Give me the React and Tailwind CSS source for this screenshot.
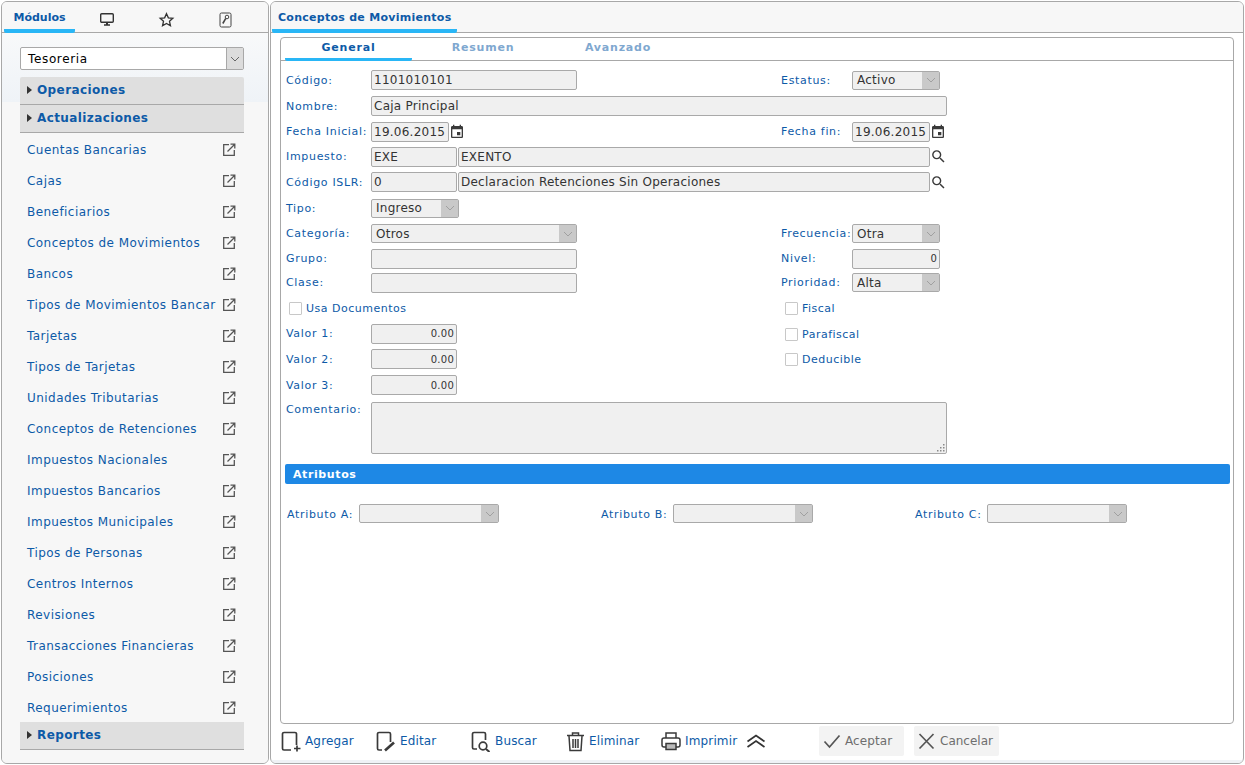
import React from "react";

const menu = ["Cuentas Bancarias","Cajas","Beneficiarios","Conceptos de Movimientos","Bancos","Tipos de Movimientos Bancar","Tarjetas","Tipos de Tarjetas","Unidades Tributarias","Conceptos de Retenciones","Impuestos Nacionales","Impuestos Bancarios","Impuestos Municipales","Tipos de Personas","Centros Internos","Revisiones","Transacciones Financieras","Posiciones","Requerimientos"];

const Ext = () => (
  <svg width="16" height="16" viewBox="0 0 16 16" fill="none" stroke="#555" strokeWidth="1.3"><path d="M8 2.700H2.700v10.600h10.600V8"/><path d="M6.500 9.500L13.500 2.500M9.500 2.200h4.300v4.300"/></svg>
);
const Cal = () => (
  <svg width="16" height="16" viewBox="0 0 24 24" fill="#3a3a3a" className="shrink-0"><path d="M17 12h-5v5h5v-5zM16 1v2H8V1H6v2H5c-1.11 0-1.99.9-1.99 2L3 19c0 1.1.89 2 2 2h14c1.1 0 2-.9 2-2V5c0-1.1-.9-2-2-2h-1V1h-2zm3 18H5V8h14v11z"/></svg>
);
const Search = () => (
  <svg width="17" height="17" viewBox="0 0 24 24" fill="#3a3a3a" className="shrink-0"><path d="M15.500 14h-.79l-.28-.27A6.470 6.470 0 0 0 16 9.500 6.500 6.500 0 1 0 9.500 16c1.610 0 3.090-.59 4.230-1.570l.27.28v.79l5 4.990L20.490 19l-4.990-5zm-6 0C7.010 14 5 11.990 5 9.500S7.010 5 9.500 5 14 7.010 14 9.500 11.990 14 9.500 14z"/></svg>
);
const Chev = ({ c = "#8f8f8f" }) => (
  <svg width="10" height="6" viewBox="0 0 10 6" fill="none" stroke={c} strokeWidth="1"><path d="M1 1l4 4 4-4"/></svg>
);
const Tri = () => (
  <svg width="6" height="8" viewBox="0 0 6 8" fill="#333" className="shrink-0"><path d="M1 0l5 4-5 4z"/></svg>
);

const Label = ({ w, children, pt = "pt-[2px]" }) => (
  <div className={`shrink-0 ${pt} text-[#0d5aa7] text-[11px] tracking-[0.68px] font-['DejaVu_Sans',sans-serif]`} style={{ width: w }}>{children}</div>
);
const Input = ({ w, children, right }) => (
  <div className={`h-[20px] shrink-0 border border-[#a9a9a9] rounded-[2px] bg-[#f0f0f0] flex items-center tracking-[0.25px] text-[#333] font-['DejaVu_Sans',sans-serif] ${right ? "justify-end pr-[2px] text-[10px]" : "pl-[2px] text-[12px]"}`} style={{ width: w }}>{children}</div>
);
const Select = ({ w, children }) => (
  <div className="h-[19px] shrink-0 border border-[#a9a9a9] rounded-[2px] bg-[#f0f0f0] flex items-center text-[12px] tracking-[0.25px] text-[#333] font-['DejaVu_Sans',sans-serif] pl-[4px]" style={{ width: w }}>
    <span className="flex-1">{children}</span>
    <span className="w-[17px] h-full bg-[#c9c9c9] flex items-center justify-center"><Chev c="#a0a0a0" /></span>
  </div>
);
const Check = ({ children }) => (
  <div className="flex items-center pt-[1px]">
    <span className="w-[13px] h-[13px] border border-[#c8c8c8] rounded-[1px] bg-white mr-[4px]"></span>
    <span className="pt-[2px] text-[#0d5aa7] text-[11px] tracking-[0.5px] font-['DejaVu_Sans',sans-serif]">{children}</span>
  </div>
);
const Head = ({ children }) => (
  <div className="h-[28px] bg-[#dfdfdf] border-b border-[#a8a8a8] flex items-center pl-[6px] pb-[2px] gap-[5px]">
    <Tri /><span className="text-[#0d5aa7] text-[12px] font-bold tracking-[0.4px] font-['DejaVu_Sans',sans-serif]">{children}</span>
  </div>
);
const Act = ({ icon, children, w }) => (
  <div className="flex items-center gap-[4px]" style={{ width: w }}>
    {icon}<span className="text-[#0d5aa7] text-[12px] tracking-[0.15px] font-['DejaVu_Sans',sans-serif]">{children}</span>
  </div>
);

export default function App() {
  return (
    <div className="w-[1245px] h-[765px] bg-white flex gap-[1px] pt-[1px] pl-[1px] overflow-hidden font-['DejaVu_Sans',sans-serif]">
      {/* left */}
      <aside className="w-[268px] h-[763px] shrink-0 border border-[#a8a8a8] rounded-[6px] bg-[#f7f7f7] flex flex-col overflow-hidden">
        <div className="h-[31px] shrink-0 flex border-b border-[#a8a8a8] bg-[#f7f7f7]">
          <div className="w-[71px] ml-[2px] h-[31px] border-b-[4px] border-[#29b6f6] rounded-b-[2px] flex items-center justify-center text-[11px] font-bold text-[#0d5aa7] pt-[6px]">Módulos</div>
          <div className="w-[60px] flex items-center justify-center ml-[2px] pt-[5px]">
            <svg width="16" height="15" viewBox="0 0 16 15" fill="none" stroke="#333" strokeWidth="1.4"><rect x="1.700" y="1.700" width="12.600" height="8.600" rx="1"/><path d="M5 13h6" strokeWidth="1.600"/><path d="M8 10v3" strokeWidth="2"/></svg>
          </div>
          <div className="w-[58px] flex items-center justify-center pt-[5px]">
            <svg width="17" height="16" viewBox="0 0 24 24" fill="none" stroke="#333" strokeWidth="2"><path d="M12 2.600l2.800 6.200 6.700.7-5 4.500 1.400 6.600L12 17.200l-5.900 3.400 1.400-6.600-5-4.500 6.700-.7z"/></svg>
          </div>
          <div className="w-[60px] flex items-center justify-center pt-[5px]">
            <svg width="13" height="16" viewBox="0 0 13 16" fill="none" stroke="#444" strokeWidth="1"><rect x="1" y="1" width="11" height="14" rx="1.500"/><circle cx="8" cy="5" r="1.800"/><path d="M6.800 6.400L3.800 11.500" strokeWidth="1.600"/></svg>
          </div>
        </div>
        <div className="flex-1 pl-[18px] pr-[24px] pt-[14px] bg-[linear-gradient(to_bottom,#f8f9fa_0px,#eff3f7_69px,#f7f7f7_69px)]">
          <div className="h-[23px] border border-[#a8a8a8] rounded-[2px] bg-white flex items-center pl-[7px] text-[12px] tracking-[0.65px] text-black">
            <span className="flex-1">Tesoreria</span>
            <span className="w-[17px] h-full bg-[#dcdcdc] border-l border-[#a8a8a8] flex items-center justify-center"><Chev c="#666" /></span>
          </div>
          <div className="mt-[7px] rounded-t-[2px] overflow-hidden">
            <Head>Operaciones</Head>
            <Head>Actualizaciones</Head>
          </div>
          <ul className="pt-[1px]">
            {menu.map((m) => (
              <li key={m} className="h-[31px] flex items-center justify-between pl-[7px] pr-[7px] text-[12px] tracking-[0.45px] text-[#0d5aa7]">
                <span>{m}</span><Ext />
              </li>
            ))}
          </ul>
          <div className="-mt-[1px]"><Head>Reportes</Head></div>
        </div>
      </aside>

      {/* right */}
      <main className="w-[974px] h-[763px] shrink-0 border border-[#a8a8a8] rounded-[6px] bg-white flex flex-col overflow-hidden">
        <div className="h-[31px] shrink-0 flex border-b border-[#a8a8a8] bg-[#f7f7f7]">
          <div className="w-[185px] ml-[1px] h-[31px] border-b-[4px] border-[#29b6f6] rounded-b-[2px] flex items-center pl-[6px] pt-[6px] text-[11px] font-bold text-[#0d5aa7] tracking-[0.27px]">Conceptos de Movimientos</div>
        </div>
        <div className="flex-1 flex flex-col px-[9px] pt-[4px]">
          <div className="h-[687px] shrink-0 border border-[#a8a8a8] rounded-[4px] flex flex-col">
            <div className="h-[23px] shrink-0 border-b border-[#a8a8a8] flex text-[11px] font-bold tracking-[0.8px]">
              <div className="w-[127px] ml-[4px] h-[23px] border-b-[3px] border-[#29b6f6] rounded-b-[2px] flex items-center justify-center text-[#0d5aa7]">General</div>
              <div className="w-[142px] flex items-center justify-center text-[#7fa8d0] pb-[2px]">Resumen</div>
              <div className="w-[128px] flex items-center justify-center text-[#7fa8d0] pb-[2px]">Avanzado</div>
            </div>
            <div className="w-full pl-[5px] pr-[5px]">
              <div className="h-[6px]"></div>
              <div className="h-[26px] flex items-center w-[945px]"><Label w="85px">Código:</Label><Input w="206px">1101010101</Input>
                <div className="ml-[204px] flex items-center"><Label w="71px">Estatus:</Label><Select w="88px">Activo</Select></div></div>
              <div className="h-[26px] flex items-center"><Label w="85px">Nombre:</Label><Input w="576px">Caja Principal</Input></div>
              <div className="h-[25px] flex items-center"><Label w="85px">Fecha Inicial:</Label><Input w="78px">19.06.2015</Input><Cal />
                <div className="ml-[316px] flex items-center"><Label w="71px">Fecha fin:</Label><Input w="78px">19.06.2015</Input><Cal /></div></div>
              <div className="h-[25px] flex items-center"><Label w="85px">Impuesto:</Label><Input w="86px">EXE</Input><div className="w-[1px]"></div><Input w="472px">EXENTO</Input><Search /></div>
              <div className="h-[26px] flex items-center"><Label w="85px">Código ISLR:</Label><Input w="86px">0</Input><div className="w-[1px]"></div><Input w="472px">Declaracion Retenciones Sin Operaciones</Input><Search /></div>
              <div className="h-[26px] flex items-center"><Label w="85px">Tipo:</Label><Select w="88px">Ingreso</Select></div>
              <div className="h-[25px] flex items-center"><Label w="85px">Categoría:</Label><Select w="206px">Otros</Select>
                <div className="ml-[204px] flex items-center"><Label w="71px">Frecuencia:</Label><Select w="88px">Otra</Select></div></div>
              <div className="h-[25px] flex items-center"><Label w="85px">Grupo:</Label><Input w="206px"></Input>
                <div className="ml-[204px] flex items-center"><Label w="71px">Nivel:</Label><Input w="88px" right>0</Input></div></div>
              <div className="h-[23px] flex items-center"><Label w="85px">Clase:</Label><Input w="206px"></Input>
                <div className="ml-[204px] flex items-center"><Label w="71px">Prioridad:</Label><Select w="88px">Alta</Select></div></div>
              <div className="h-[27px] flex items-center"><div className="pl-[3px] w-[499px]"><Check>Usa Documentos</Check></div><Check>Fiscal</Check></div>
              <div className="h-[25px] flex items-center"><Label w="85px">Valor 1:</Label><Input w="86px" right>0.00</Input><div className="ml-[328px]"><Check>Parafiscal</Check></div></div>
              <div className="h-[26px] flex items-center"><Label w="85px">Valor 2:</Label><Input w="86px" right>0.00</Input><div className="ml-[328px]"><Check>Deducible</Check></div></div>
              <div className="h-[26px] flex items-center"><Label w="85px">Valor 3:</Label><Input w="86px" right>0.00</Input></div>
              <div className="flex mt-[4px]"><Label w="85px" pt="pt-0">Comentario:</Label>
                <div className="relative w-[576px] h-[52px]">
                  <textarea readOnly className="block w-full h-full resize-none border border-[#a9a9a9] rounded-[2px] bg-[#f0f0f0] outline-none"></textarea>
                  <svg width="10" height="10" viewBox="0 0 10 10" fill="#8a8a8a" className="absolute right-[1px] bottom-[1px]"><rect x="7" y="1" width="1.500" height="1.500"/><rect x="4" y="4" width="1.500" height="1.500"/><rect x="7" y="4" width="1.500" height="1.500"/><rect x="1" y="7" width="1.500" height="1.500"/><rect x="4" y="7" width="1.500" height="1.500"/><rect x="7" y="7" width="1.500" height="1.500"/></svg>
                </div></div>
              <div className="mt-[10px] -ml-[1px] h-[20px] bg-[#1e88e5] rounded-[2px] flex items-center pl-[8px] pt-[3px] text-white text-[11px] font-bold tracking-[0.6px] w-[945px]">Atributos</div>
              <div className="mt-[20px] flex items-center pl-[1px]">
                <div className="flex items-center w-[314px]"><Label w="72px" pt="pt-[3px]">Atributo A:</Label><Select w="140px"></Select></div>
                <div className="flex items-center w-[314px]"><Label w="72px" pt="pt-[3px]">Atributo B:</Label><Select w="140px"></Select></div>
                <div className="flex items-center"><Label w="72px" pt="pt-[3px]">Atributo C:</Label><Select w="140px"></Select></div>
              </div>
            </div>
          </div>
          <div className="h-[32px] mt-[1px] flex items-center pl-[1px]">
            <Act w="95px" icon={<svg width="20" height="21" viewBox="0 0 20 21" fill="none" stroke="#3a3a3a" strokeWidth="1.700"><path d="M10 19H3a1.500 1.500 0 0 1-1.500-1.500V3A1.500 1.500 0 0 1 3 1.500h11A1.500 1.500 0 0 1 15.500 3v11"/><path d="M16 14.500v6M13 17.500h6.500"/></svg>}>Agregar</Act>
            <Act w="95px" icon={<svg width="20" height="21" viewBox="0 0 20 21" fill="none" stroke="#3a3a3a" strokeWidth="1.700"><path d="M6 19H3a1.500 1.500 0 0 1-1.500-1.500V3A1.500 1.500 0 0 1 3 1.500h10A1.500 1.500 0 0 1 14.500 3v8"/><path d="M9 19.500l9-8" strokeWidth="2.600"/></svg>}>Editar</Act>
            <Act w="95px" icon={<svg width="20" height="21" viewBox="0 0 20 21" fill="none" stroke="#3a3a3a" strokeWidth="1.700"><path d="M6 18H3a1.500 1.500 0 0 1-1.500-1.500V3A1.500 1.500 0 0 1 3 1.500h10A1.500 1.500 0 0 1 14.500 3v6"/><circle cx="12" cy="15" r="3.800"/><path d="M15 18l3.500 3" strokeWidth="2"/></svg>}>Buscar</Act>
            <Act w="95px" icon={<svg width="19" height="21" viewBox="0 0 19 21" fill="none" stroke="#3a3a3a" strokeWidth="1.500"><path d="M1 4.500h17M6.500 4V2h6v2"/><path d="M3 5l1 14.500h11L16 5"/><path d="M7 8v9M9.500 8v9M12 8v9"/></svg>}>Eliminar</Act>
            <Act w="95px" icon={<svg width="20" height="21" viewBox="0 0 20 21" fill="none" stroke="#3a3a3a" strokeWidth="1.500"><path d="M5 7V2h10v5"/><rect x="1" y="7" width="18" height="9" rx="2"/><path d="M5 12.500h10v6H5z" fill="#bbb"/></svg>}>Imprimir</Act>
            <svg width="20" height="14" viewBox="0 0 20 14" fill="none" stroke="#333" strokeWidth="1.700" className="-ml-[10px]"><path d="M1.500 7.500L10 1.500l8.500 6M1.500 13L10 7l8.500 6"/></svg>
            <div className="w-[85px] h-[30px] ml-[53px] bg-[#f3f3f3] rounded-[2px] flex items-center gap-[4px] pl-[4px] text-[12px] tracking-[0.1px] text-[#6e6e6e]">
              <svg width="18" height="18" viewBox="0 0 18 18" fill="none" stroke="#555" strokeWidth="1.700"><path d="M1.500 9.500L6.500 15 16.500 3.500"/></svg>Aceptar
            </div>
            <div className="w-[85px] h-[30px] ml-[10px] bg-[#f3f3f3] rounded-[2px] flex items-center gap-[5px] pl-[4px] text-[12px] text-[#6e6e6e]">
              <svg width="17" height="18" viewBox="0 0 17 18" fill="none" stroke="#555" strokeWidth="1.700"><path d="M1.500 2l14 14.500M15.500 2l-14 14.500"/></svg>Cancelar
            </div>
          </div>
        </div>
        <div className="h-[3px] shrink-0 bg-[#eff2f6]"></div>
      </main>
    </div>
  );
}
